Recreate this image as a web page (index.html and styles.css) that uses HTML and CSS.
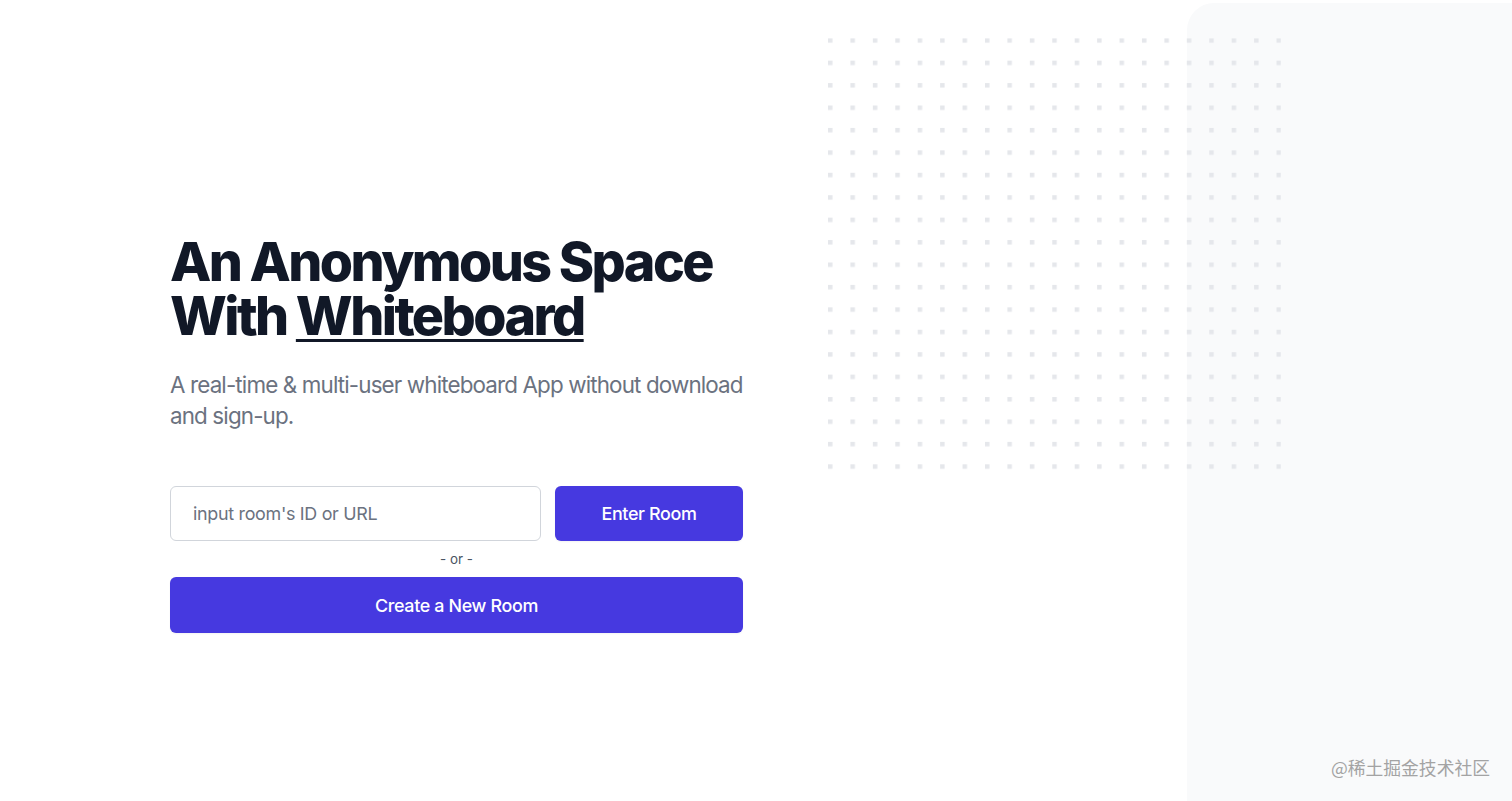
FILE: index.html
```html
<!DOCTYPE html>
<html lang="en">
<head>
<meta charset="utf-8">
<title>Anonymous Whiteboard</title>
<link rel="stylesheet" href="styles.css">
</head>
<body>
<div class="page">
  <div class="panel"></div>
  <svg class="dots" width="453" height="440" viewBox="0 0 404 392" aria-hidden="true">
    <defs>
      <pattern id="dotp" x="0" y="0" width="20" height="20" patternUnits="userSpaceOnUse">
        <rect x="0" y="0" width="4" height="4" fill="#e5e7eb"></rect>
      </pattern>
    </defs>
    <rect width="404" height="392" fill="url(#dotp)"></rect>
  </svg>
  <main class="hero">
    <h1 class="title">An Anonymous Space<br>With <span class="mark">Whiteboard</span></h1>
    <p class="lead">A real-time &amp; multi-user whiteboard App without download and sign-up.</p>
    <div class="join">
      <input class="room-input" type="text" placeholder="input room's ID or URL">
      <button class="btn btn-enter">Enter Room</button>
    </div>
    <div class="or">- or -</div>
    <button class="btn btn-create">Create a New Room</button>
  </main>
  <div class="watermark">@稀土掘金技术社区</div>
</div>
</body>
</html>
```

FILE: styles.css
```css
* { box-sizing: border-box; }
html, body { margin: 0; padding: 0; }
body {
  font-family: Inter, "Noto Sans", "Liberation Sans", sans-serif;
  background: #ffffff;
  color: #111827;
}
.page {
  position: relative;
  width: 1512px;
  height: 801px;
  overflow: hidden;
}
.panel {
  position: absolute;
  top: 3px;
  left: 1187px;
  right: 0;
  bottom: 0;
  background: #f9fafb;
  border-top-left-radius: 27px;
}
.dots {
  position: absolute;
  top: 38px;
  left: 828px;
}
.hero {
  position: relative;
  padding: 235px 0 0 170px;
  width: 743px;
  display: flex;
  flex-direction: column;
}
.title {
  margin: 0;
  font-size: 53.76px;
  line-height: 1;
  font-weight: 800;
  letter-spacing: -0.048em;
  color: #111827;
  white-space: nowrap;
}
.mark {
  text-decoration: underline;
  text-decoration-thickness: 3px;
  text-underline-offset: 4px;
}
.lead {
  margin: 26px 0 0;
  font-size: 22.4px;
  line-height: 31.36px;
  letter-spacing: -0.86px;
  color: #6b7280;
  width: 590px;
}
.join {
  margin-top: 55px;
  display: flex;
  gap: 14px;
}
.room-input {
  width: 371px;
  height: 55px;
  border: 1px solid #d1d5db;
  border-radius: 6px;
  padding: 0 22px;
  font-family: inherit;
  font-size: 17.9px;
  letter-spacing: -0.3px;
  color: #111827;
  background: #fff;
  outline: none;
}
.room-input::placeholder { color: #6b7280; opacity: 1; }
.btn {
  border: 0;
  border-radius: 6px;
  background: #4639e0;
  color: #ffffff;
  font-family: inherit;
  font-size: 17.9px;
  font-weight: 500;
  letter-spacing: -0.35px;
  cursor: pointer;
  box-shadow: 0 1px 2px rgba(0,0,0,0.05);
}
.btn-enter {
  width: 188px;
  height: 55px;
}
.or {
  height: 36px;
  display: flex;
  align-items: center;
  justify-content: center;
  font-size: 13.4px;
  color: #4b5563;
  width: 573px;
}
.btn-create {
  width: 573px;
  height: 56px;
}
.watermark {
  position: absolute;
  right: 22px;
  bottom: 21px;
  font-family: "Noto Sans CJK SC", "Noto Sans", sans-serif;
  font-size: 17.8px;
  color: #a3a3a3;
  letter-spacing: 0;
}
```
